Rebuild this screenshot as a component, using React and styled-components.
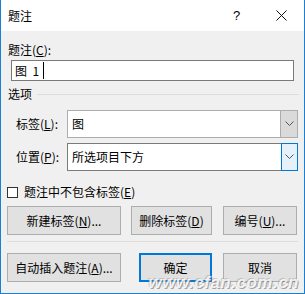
import styled, { createGlobalStyle } from "styled-components";

const GlobalStyle = createGlobalStyle`
  body {
    margin: 0;
    font-family: "Noto Sans CJK SC", "Liberation Sans", sans-serif;
    font-size: 12px;
    color: #000;
  }
`;

const Window = styled.div`
  position: relative;
  width: 305px;
  height: 294px;
  box-sizing: border-box;
  border: 1px solid #1a80d6;
  border-top: none;
  background: #f0f0f0;
  display: flex;
  flex-direction: column;
  overflow: hidden;
`;

const TitleBar = styled.div`
  height: 31px;
  background: #fff;
  display: flex;
  align-items: center;
  padding-left: 7px;
`;

const Title = styled.div`
  flex: 1;
  line-height: 16px;
`;

const CaptionButton = styled.div`
  width: 45px;
  height: 31px;
  display: flex;
  align-items: center;
  justify-content: center;
  font-family: "Liberation Sans", sans-serif;
  font-size: 13px;
`;

const Body = styled.div`
  padding: 0 6px;
  display: flex;
  flex-direction: column;
`;

const Label = styled.div`
  line-height: 16px;
  margin-top: ${(p) => p.$top || 0}px;
  padding-left: ${(p) => p.$indent || 1}px;
  width: ${(p) => (p.$width ? `${p.$width}px` : "auto")};
  flex-shrink: 0;
  box-sizing: border-box;
  white-space: nowrap;
`;

const TextBox = styled.div`
  margin: 2px 4px 0 4px;
  height: 21px;
  box-sizing: border-box;
  border: 1px solid #7a7a7a;
  background: #fff;
  display: flex;
  align-items: center;
  padding-left: 3px;
  line-height: 16px;
  white-space: pre;
`;

const Caret = styled.span`
  display: inline-block;
  width: 1px;
  height: 17px;
  background: #000;
  margin-left: 4px;
`;

const GroupHead = styled.div`
  margin-top: 5px;
  display: flex;
  align-items: center;
  line-height: 16px;
  padding-left: 1px;
  margin-right: -1px;
`;

const GroupLine = styled.div`
  flex: 1;
  height: 1px;
  background: #dcdcdc;
  margin-left: 5px;
`;

const FieldRow = styled.div`
  margin-top: ${(p) => p.$top}px;
  display: flex;
  align-items: center;
`;

const Combo = styled.div`
  flex: 1;
  height: 28px;
  box-sizing: border-box;
  border: 1px solid ${(p) => (p.$focus ? "#7a7a7a" : "#adadad")};
  background: #fff;
  display: flex;
  align-items: stretch;
`;

const ComboText = styled.div`
  flex: 1;
  display: flex;
  align-items: center;
  padding-left: 4px;
  line-height: 16px;
`;

const DropButton = styled.div`
  width: 17px;
  margin: ${(p) => (p.$focus ? "-1px -1px -1px 0" : "0")};
  box-sizing: border-box;
  border: 1px solid ${(p) => (p.$focus ? "#0078d7" : "#adadad")};
  border-width: ${(p) => (p.$focus ? "1px" : "0 0 0 1px")};
  background: ${(p) => (p.$focus ? "#e5f1fb" : "#dadada")};
  display: flex;
  align-items: center;
  justify-content: center;
`;

const CheckRow = styled.div`
  margin-top: 13px;
  display: flex;
  align-items: center;
  gap: 6px;
  line-height: 16px;
`;

const CheckBox = styled.div`
  width: 11px;
  height: 11px;
  box-sizing: border-box;
  border: 1px solid #333;
  background: #fff;
`;

const ButtonRow = styled.div`
  margin-top: ${(p) => p.$top}px;
  display: flex;
`;

const Button = styled.div`
  width: ${(p) => p.$width}px;
  height: 29px;
  margin-left: ${(p) => p.$gap || 0}px;
  box-sizing: border-box;
  border: ${(p) => (p.$primary ? "2px solid #0078d7" : "1px solid #adadad")};
  background: #e1e1e1;
  display: flex;
  align-items: center;
  justify-content: center;
  line-height: 16px;
  white-space: nowrap;
`;

const Separator = styled.div`
  margin-top: 6px;
  height: 1px;
  background: #dcdcdc;
`;

const Watermark = styled.div`
  position: absolute;
  right: 5px;
  bottom: 2px;
  line-height: 16px;
  font-family: "Liberation Sans", sans-serif;
  font-size: 17px;
  font-weight: bold;
  font-style: italic;
  color: rgba(255, 255, 255, 0.85);
  text-shadow: 1px 1px 0 rgba(110, 110, 110, 0.6), -1px -1px 0 rgba(150, 150, 150, 0.45);
  letter-spacing: 0.5px;
  pointer-events: none;
`;

const Chevron = () => (
  <svg width="9" height="6" viewBox="0 0 9 6">
    <path d="M0.5 0.5 L4.5 4.5 L8.5 0.5" fill="none" stroke="#555" strokeWidth="1" />
  </svg>
);

const CloseIcon = () => (
  <svg width="11" height="11" viewBox="0 0 11 11">
    <path d="M0.5 0.5 L10.5 10.5 M10.5 0.5 L0.5 10.5" stroke="#111" strokeWidth="1" />
  </svg>
);

const App = () => {
  return (
    <>
      <GlobalStyle />
      <Window>
        <TitleBar>
          <Title>题注</Title>
          <CaptionButton>?</CaptionButton>
          <CaptionButton>
            <CloseIcon />
          </CaptionButton>
        </TitleBar>
        <Body>
          <Label $top={11}>
            题注(<u>C</u>):
          </Label>
          <TextBox>
            {"图  1"}
            <Caret />
          </TextBox>
          <GroupHead>
            选项
            <GroupLine />
          </GroupHead>
          <FieldRow $top={8}>
            <Label $indent={9} $width={60}>
              标签(<u>L</u>):
            </Label>
            <Combo>
              <ComboText>图</ComboText>
              <DropButton>
                <Chevron />
              </DropButton>
            </Combo>
          </FieldRow>
          <FieldRow $top={5}>
            <Label $indent={9} $width={60}>
              位置(<u>P</u>):
            </Label>
            <Combo $focus>
              <ComboText>所选项目下方</ComboText>
              <DropButton $focus>
                <Chevron />
              </DropButton>
            </Combo>
          </FieldRow>
          <CheckRow>
            <CheckBox />
            <span>
              题注中不包含标签(<u>E</u>)
            </span>
          </CheckRow>
          <ButtonRow $top={6}>
            <Button $width={114}>
              新建标签(<u>N</u>)...
            </Button>
            <Button $width={81} $gap={10}>
              删除标签(<u>D</u>)
            </Button>
            <Button $width={74} $gap={11}>
              编号(<u>U</u>)...
            </Button>
          </ButtonRow>
          <Separator />
          <ButtonRow $top={11}>
            <Button $width={114}>
              自动插入题注(<u>A</u>)...
            </Button>
            <Button $width={73} $gap={18} $primary>
              确定
            </Button>
            <Button $width={74} $gap={11}>
              取消
            </Button>
          </ButtonRow>
        </Body>
        <Watermark>www.cfan.com.cn</Watermark>
      </Window>
    </>
  );
};

export default App;
